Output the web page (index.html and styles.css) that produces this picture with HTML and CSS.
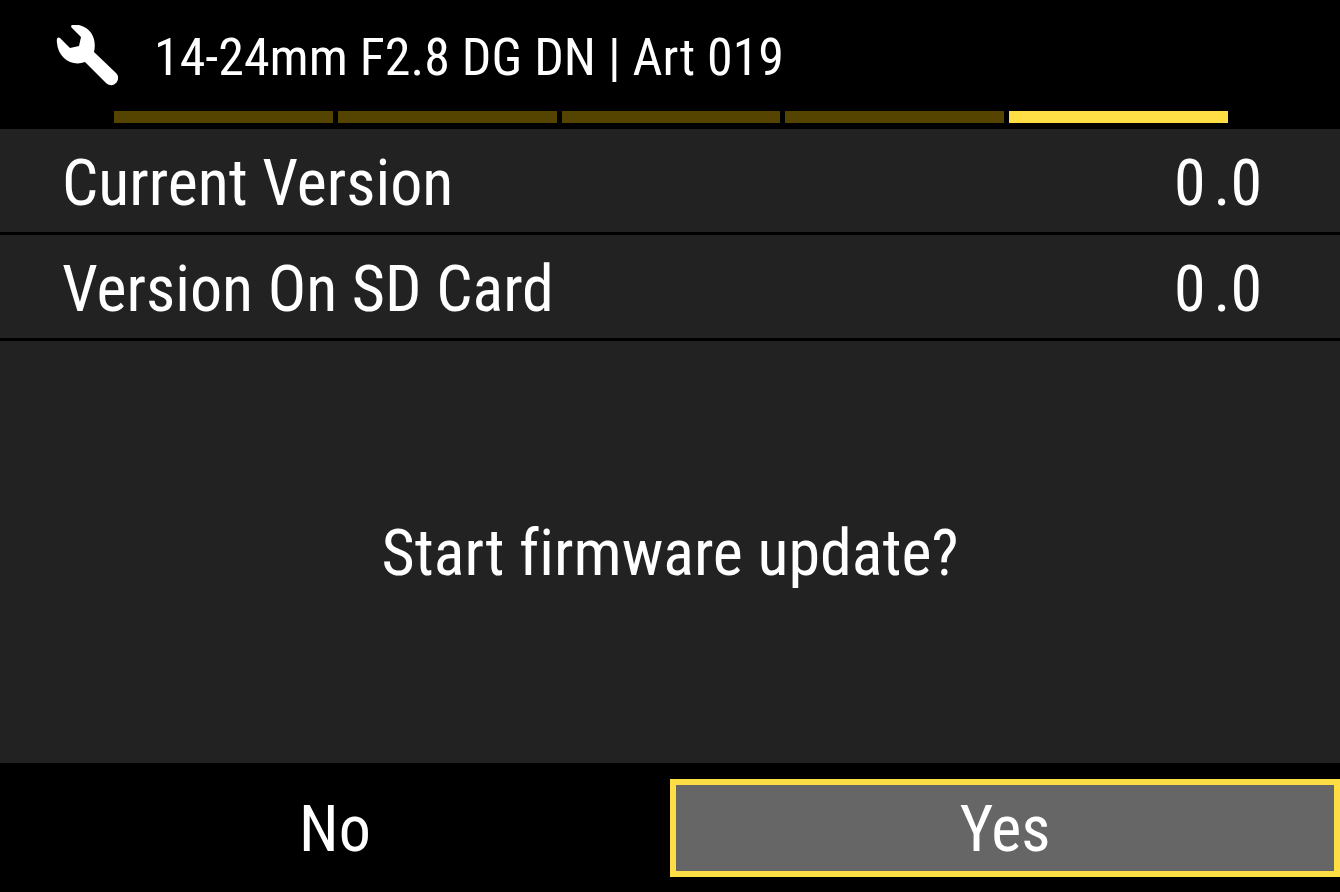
FILE: index.html
```
<!DOCTYPE html>
<html lang="en">
<head>
    <meta charset="UTF-8">
    <meta name="viewport" content="width=device-width, initial-scale=1.0">
    <title>Firmware update</title>
    <link rel="stylesheet" href="styles.css">
</head>
<body>
    <header class="header">
        <div class="title">
            <svg class="wrench" viewBox="0 0 62 62" aria-hidden="true">
                <path fill="#fff" d="M15 1C16 -1 21 -1 26 1C35 4 41 14 38 27L60 48C66 54 58 65 50 58L29 37C16 42 2 33 1 18Q0 11 4 13L14 23L23 21L25 12L16 3Q15 2 15 1Z"/>
            </svg>
            <h1>14-24mm F2.8 DG DN | Art 019</h1>
        </div>
        <div class="pages">
            <span></span>
            <span></span>
            <span></span>
            <span></span>
            <span class="active"></span>
        </div>
    </header>
    <main class="content">
        <dl class="versions">
            <div class="row">
                <dt>Current Version</dt>
                <dd><span>0</span><span>.0</span></dd>
            </div>
            <div class="row">
                <dt>Version On SD Card</dt>
                <dd><span>0</span><span>.0</span></dd>
            </div>
        </dl>
        <p class="question">Start firmware update?</p>
    </main>
    <footer class="buttons">
        <button type="button">No</button>
        <button type="button" class="selected">Yes</button>
    </footer>
</body>
</html>
```
FILE: styles.css
```
*{
    margin: 0;
    padding: 0;
    box-sizing: border-box;
}
body{
    min-height: 100vh;
    display: flex;
    flex-direction: column;
    background-color: #000;
    color: #fff;
    font-family: "Roboto Condensed", "Liberation Sans", Arial, sans-serif;
    font-size: 64px;
    font-variant-ligatures: none;
    line-height: 80px;
}
.title{
    display: flex;
    align-items: center;
    gap: 36px;
    height: 111px;
    padding: 0 56px;
}
.wrench{
    width: 62px;
    height: 62px;
    flex: none;
}
h1{
    padding-top: 4px;
    font-size: 52px;
    font-weight: normal;
}
/* page indicator */
.pages{
    display: flex;
    gap: 5px;
    padding: 0 112px 6px 114px;
}
.pages span{
    flex: 1;
    height: 12px;
    background-color: #554400;
}
.pages .active{
    background-color: #ffdd44;
}
.content{
    flex: 1;
    display: flex;
    flex-direction: column;
    background-color: #222;
}
.row{
    display: flex;
    align-items: center;
    justify-content: space-between;
    height: 106px;
    padding: 6px 78px 0 62px;
    border-bottom: 3px solid #000;
}
.row dd{
    display: flex;
    gap: 8px;
}
.question{
    flex: 1;
    display: flex;
    align-items: center;
    justify-content: center;
    padding-top: 4px;
}
.buttons{
    display: flex;
    padding: 16px 0 15px;
}
.buttons button{
    flex: 1;
    height: 98px;
    padding-top: 4px;
    border: 6px solid transparent;
    background: none;
    color: #fff;
    font: inherit;
    cursor: pointer;
}
.buttons .selected{
    border-color: #ffdd44;
    background-color: #666;
}
```
